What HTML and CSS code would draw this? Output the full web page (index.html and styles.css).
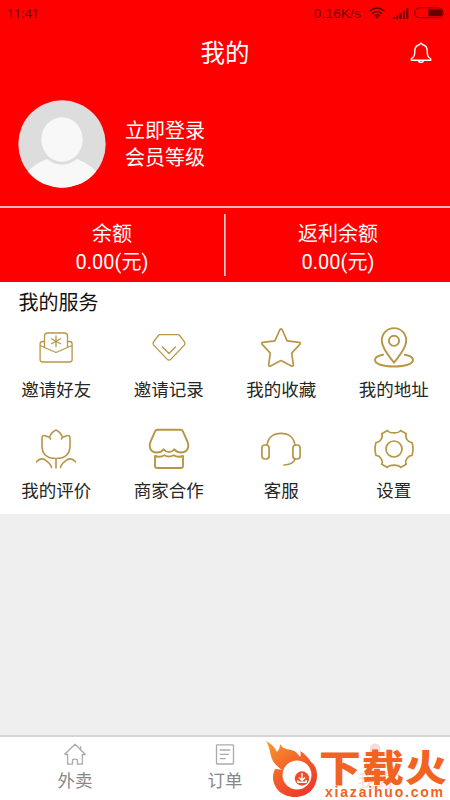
FILE: index.html
```html
<!DOCTYPE html>
<html lang="zh-CN">
<head>
<meta charset="utf-8">
<title>我的</title>
<link rel="stylesheet" href="styles.css">
</head>
<body>
<header class="top">
  <div class="status">
    <span class="time">11:41</span>
    <span class="speed">0.16K/s</span>
    <svg class="wifi" width="16" height="12" viewBox="0 0 16 12" fill="none" stroke="currentColor" stroke-width="1.5"><path d="M.6 4.2Q8-2.2 15.4 4.2M3 6.7Q8 2.4 13 6.7M5.2 9Q8 6.6 10.8 9"/><circle cx="8" cy="10.2" r="1.2" fill="currentColor" stroke="none"/></svg>
    <svg class="signal" width="16" height="11" viewBox="0 0 16 11" fill="currentColor"><path d="M0 9h2v2H0zM3.3 7.5h2V11h-2zM6.6 5.5h2V11h-2zM10 3h2v8h-2zM13.3 0h2v11h-2z"/></svg>
    <svg class="battery" width="30" height="12" viewBox="0 0 30 12"><rect x=".6" y=".8" width="28.6" height="9.9" rx="4.9" fill="none" stroke="currentColor" stroke-width=".9"/><path d="M14.3 2.2H25a3.5 3.5 0 0 1 0 7H14.3z" fill="currentColor"/></svg>
  </div>
  <div class="titlebar">
    <h1>我的</h1>
    <svg class="bell" width="22" height="22" viewBox="0 0 22 22" fill="none" stroke="#fff" stroke-width="1.4" stroke-linejoin="round"><path d="M11 1.3c.8 0 1.1.5 1.2 1.2 3 .7 5 3 5 6.2 0 4.500.5 6 3.500 8.100V18.200H1.300V16.800c3-2.100 3.500-3.600 3.500-8.100 0-3.200 2-5.500 5-6.200.1-.7.400-1.200 1.200-1.200zM8.300 18.400q.4 2 2.700 2t2.700-2"/></svg>
  </div>
  <div class="profile">
    <svg class="avatar" width="88" height="88" viewBox="0 0 88 88"><defs><clipPath id="disc"><circle cx="44" cy="44" r="43.700"/></clipPath></defs><g clip-path="url(#disc)"><path fill="#ddd" d="M0 0h88v88H0z"/><path fill="#f8f8f8" d="M5 88V77Q15 64 29 59Q44 70 59 59Q73 64 83 77V88z"/><ellipse cx="44" cy="40.500" rx="22.500" ry="24" fill="#ddd"/><ellipse cx="44" cy="39.500" rx="20.700" ry="22.300" fill="#f8f8f8"/></g></svg>
    <div class="member"><div>立即登录</div><div>会员等级</div></div>
  </div>
  <div class="balances">
    <div class="balance"><div>余额</div><div>0.00(元)</div></div>
    <div class="balance"><div>返利余额</div><div>0.00(元)</div></div>
  </div>
</header>
<section class="services">
  <h2>我的服务</h2>
  <div class="grid">
    <div class="item"><svg viewBox="0 0 42 42"><g stroke-width="1.300"><path d="M9 14.500H7.600a2.500 2.500 0 0 0-2.500 2.500v15.500a2.500 2.500 0 0 0 2.500 2.500h27a2.500 2.500 0 0 0 2.500-2.500V17a2.500 2.500 0 0 0-2.500-2.500H33M5.300 18.500l4.200 2L21 25.500l11.500-5 4.400-2M9.500 20.300V9a3 3 0 0 1 3-3h17a3 3 0 0 1 3 3v11.300M21 9v10.500M16.500 11.700l9 5M25.500 11.700l-9 5"/></g></svg><span>邀请好友</span></div>
    <div class="item"><svg viewBox="0 0 42 42"><g stroke-width="1.300"><path d="M12 7.700h18q1 0 1.700.8l4.900 6.600q1 1.600-.3 3L23 32.100q-2 2-4 0L5.700 18.100q-1.300-1.400-.3-3l4.900-6.600q.7-.8 1.700-.8zM14.600 20l6.400 6.500 6.400-6.500"/></g></svg><span>邀请记录</span></div>
    <div class="item"><svg viewBox="0 0 42 42"><g stroke-width="1.700"><path d="M19.700 3q1.300-2.300 2.600 0l4.800 10.800 12 1.600q2.200.5.500 2.300l-7.900 8.400 1.600 11.200q.2 2.400-1.900 1.600L21 33.600l-10.400 5.300q-2.100.8-1.900-1.600l1.600-11.200-7.900-8.400q-1.700-1.800.5-2.300l12-1.600z"/></g></svg><span>我的收藏</span></div>
    <div class="item"><svg viewBox="0 0 42 42"><g stroke-width="1.900"><path d="M21 35.700C13.500 26 8.800 19.500 8.800 13.300a12.200 12.200 0 0 1 24.400 0C33.200 19.500 28.500 26 21 35.700zM10.100 27.700C5 28.500 2 30.600 2 33c0 4 8 6.500 19 6.500S40 37 40 33c0-2.400-3-4.500-8.100-5.300"/><circle cx="21" cy="13.800" r="5.100"/></g></svg><span>我的地址</span></div>
    <div class="item"><svg viewBox="0 0 42 42"><g stroke-width="1.600"><path d="M21 30.500C11 30.500 7 26 7 17.500V10q0-3 3-2.300l4.500 1.600C16 5.500 18.500 3 21 2c2.500 1 5 3.500 6.500 7.300L32 7.700q3-.7 3 2.300v7.500c0 8.500-4 13-14 13zM14.500 9.300 15.500 11M27.500 9.300 26.500 11M21 30.500V40M1.500 33.800C5 29.500 9 30.500 11.500 33c2.500 2 4.500 3.500 5 6.500M40.500 33.800C37 29.500 33 30.500 30.500 33c-2.500 2-4.500 3.500-5 6.500"/></g></svg><span>我的评价</span></div>
    <div class="item"><svg viewBox="0 0 42 42"><g stroke-width="1.900"><path d="M9.300 1.700h23.400q1.300 0 2 1.200l4.700 10.600c2.300 6-.4 11-6.100 11q-4.300 0-7-3.200-5.300 5.600-10.600 0-2.700 3.200-7 3.200c-5.700 0-8.400-5-6.100-11L7.300 2.900q.7-1.200 2-1.200zM7 28q5 1.800 9.500-.8 4.500 2.700 9 0 4.500 2.600 9.500.8v9.700q0 2.300-2.300 2.300H9.300Q7 40 7 37.700z"/></g></svg><span>商家合作</span></div>
    <div class="item"><svg viewBox="0 0 42 42"><g stroke-width="1.700"><rect x="1.900" y="17" width="7.200" height="14" rx="3"/><rect x="32.900" y="17" width="7.200" height="14" rx="3"/><path d="M7 17.200C8 9.500 13.500 5.300 21 5.300S34 9.500 35 17.200M35.200 31c-1.500 3.600-5 5.700-11.200 6"/></g></svg><span>客服</span></div>
    <div class="item"><svg viewBox="0 0 42 42"><g stroke-width="1.700"><path d="M14.500 2.500C16 5.600 26 5.600 27.500 2.500L33.300 5.700C31.300 9 35 14.700 39 14.500Q41 21 39 27.500C35 27.300 31.300 33 33.300 36.300L27.500 39.500C26 36.400 16 36.400 14.500 39.500L8.700 36.300C10.700 33 7 27.300 3 27.500Q1 21 3 14.500C7 14.700 10.700 9 8.700 5.700z"/><circle cx="21" cy="21" r="8"/></g></svg><span>设置</span></div>
  </div>
</section>
<nav class="tabs">
  <div class="tab"><svg width="24" height="24" viewBox="0 0 24 24"><path d="M1.500 12.500 12 2.300 22.500 12.500M1.500 12.500H4.600V22.200H9.500V18.500Q9.500 17.200 12 17.200T14.500 18.500V22.200H19.400V12.500H22.500M17.600 7V4.300"/></svg><span>外卖</span></div>
  <div class="tab"><svg width="24" height="24" viewBox="0 0 24 24"><rect x="3.500" y="2.800" width="17" height="19.200" rx=".8"/><path d="M6.700 8h10.600M6.700 12.300h9M6.700 16.700h6"/></svg><span>订单</span></div>
  <div class="tab active"><svg width="24" height="24" viewBox="0 0 24 24"><circle cx="12" cy="7" r="5.500"/><path d="M2 22q1-8 10-8t10 8z"/></svg><span>我的</span></div>
</nav>
<aside class="brand">
  <svg class="flame" width="54" height="58" viewBox="0 0 54 58"><defs><linearGradient id="fire" x1="0" y1="0" x2=".7" y2="1"><stop offset="0" stop-color="#f99a2b"/><stop offset=".6" stop-color="#f35a29"/><stop offset="1" stop-color="#ee3a2b"/></linearGradient></defs><path fill="url(#fire)" d="M1 0C7 3 10 7 12 11C14 9 15 6 15 3C17 7 21 8 26 9C31 10 33 13 35 16C36 14 36 12 35 10C39 12 43 16 46 21C50 24 52 29 52 34C52 47 43 56 30 56C17 56 8 47 8 36C8 33 9 30 10 28Q14 28 17 29C13 26 9 23 7 18C5 13 5 6 1 0z"/><circle cx="32" cy="34" r="14.500" fill="#fff"/><circle cx="37" cy="37.500" r="7.200" fill="#f04c29"/><path d="M37 32v7M34 36.500l3 3 3-3M32.800 39v2.300h8.400V39" fill="none" stroke="#fff" stroke-width="1.400"/></svg>
  <div class="words">
    <div class="name"><span>下</span><span>载</span><span>火</span></div>
    <div class="site">xiazaihuo.com</div>
  </div>
</aside>
</body>
</html>
```
FILE: styles.css
```css
* { box-sizing: border-box; }
body {
  margin: 0;
  width: 450px;
  height: 800px;
  overflow: hidden;
  position: relative;
  display: flex;
  flex-direction: column;
  background: #efefef;
  font-family: Roboto, "Noto Sans CJK SC", sans-serif;
}
svg { display: block; flex: none; }
.top { height: 282px; background: #f00; color: #fff; flex: none; }
.status {
  height: 26px;
  padding: 0 6px 0 7px;
  display: flex;
  align-items: center;
  font-size: 13.5px;
  color: #690000;
}
.time { font-family: "Noto Sans", sans-serif; font-size: 12.5px; }
.speed { margin-left: auto; font-family: "Liberation Sans", sans-serif; letter-spacing: .2px; }
.wifi { margin-left: 8px; }
.signal { margin-left: 8px; }
.battery { margin-left: 5px; }
.titlebar {
  height: 54px;
  display: grid;
  grid-template-columns: 1fr auto 1fr;
  align-items: center;
}
h1 { grid-column: 2; margin: 0; font-size: 24.5px; line-height: 56px; height: 54px; font-weight: 400; }
.bell { justify-self: end; margin-right: 18px; }
.profile {
  height: 126px;
  padding: 19.500px 0 0 18px;
  display: flex;
  gap: 19px;
  font-size: 20px;
  line-height: 27px;
}
.member { padding-top: 18.500px; }
.balances {
  height: 76px;
  border-top: 2px solid #ffb9b9;
  display: grid;
  grid-template-columns: 1fr 1fr;
  text-align: center;
  font-size: 20px;
  line-height: 28px;
}
.balance { margin: 6px 0; padding-top: 6px; }
.balance:first-child { border-right: 1px solid #ffc4c4; }
.balance:last-child { border-left: 1px solid #ff8080; }
.services { height: 232px; background: #fff; flex: none; }
h2 { margin: 0; padding-left: 18.500px; height: 42px; font-size: 20px; line-height: 43px; font-weight: 400; color: #111; }
.grid { display: grid; grid-template-columns: repeat(4, 1fr); grid-auto-rows: 101px; padding-top: 3px; }
.item { display: flex; flex-direction: column; align-items: center; gap: 8px; font-size: 17.500px; line-height: 26px; color: #262626; }
.item svg { width: 42px; height: 42px; fill: none; stroke: #b79747; stroke-linejoin: round; stroke-linecap: round; }
.tabs {
  margin-top: auto;
  height: 65px;
  border-top: 2px solid #d4d4d4;
  background: #fff;
  display: grid;
  grid-template-columns: repeat(3, 1fr);
  color: #888;
  font-size: 17.500px;
  line-height: 26px;
}
.tab { display: flex; flex-direction: column; align-items: center; gap: 2px; padding-top: 5px; }
.tab svg { fill: none; stroke: #aaa; stroke-width: 1.300; stroke-linejoin: round; }
.active { color: #ffdada; }
.active svg { fill: #ffdada; stroke: none; }
.brand { position: absolute; left: 265px; top: 741px; display: flex; }
.words { margin-top: 6px; width: 128px; }
.name { display: flex; height: 39px; line-height: 39px; font-size: 37px; font-weight: 900; color: #f26322; font-family: "Noto Sans CJK SC", sans-serif; transform: scaleX(1.130); transform-origin: 0 50%; }
.name span { width: 38px; }
.site { margin-left: 6px; height: 14px; font: 700 14px/12px "Liberation Sans", sans-serif; letter-spacing: 1.800px; color: #f26322; }
```
